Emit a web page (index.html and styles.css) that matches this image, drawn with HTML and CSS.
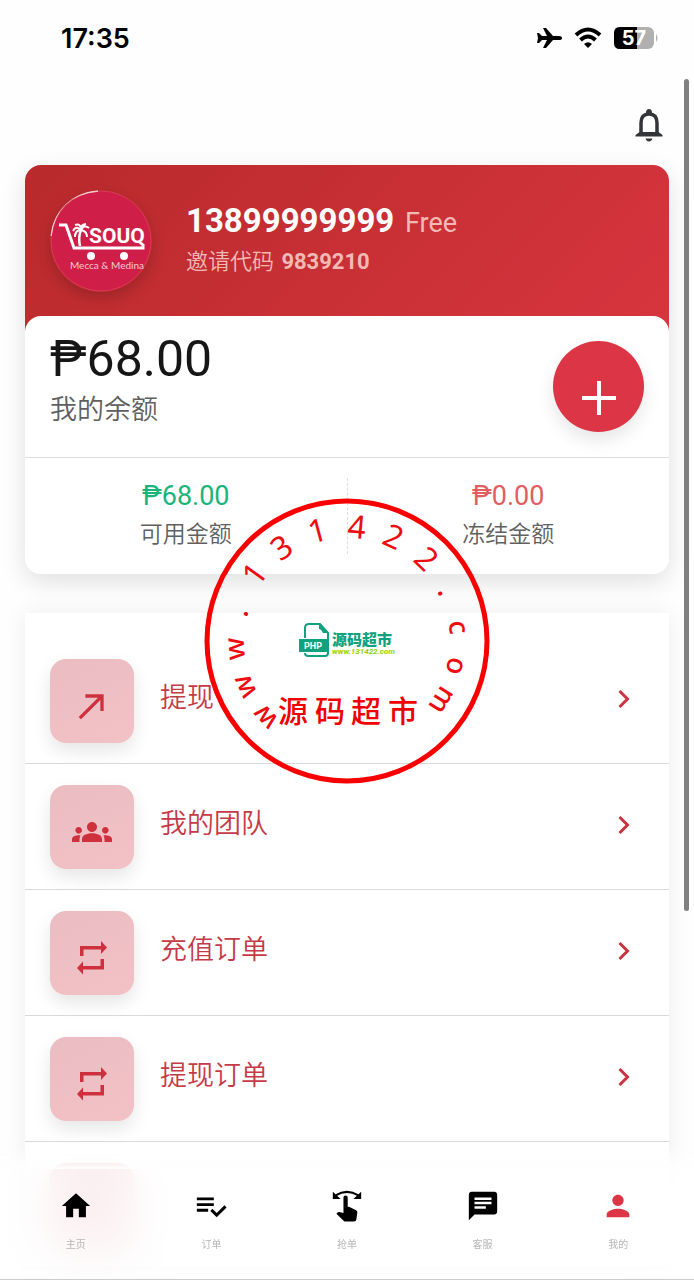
FILE: index.html
```html
<!DOCTYPE html>
<html lang="zh">
<head>
<meta charset="utf-8">
<meta name="viewport" content="width=device-width, initial-scale=1">
<title>我的</title>
<link rel="stylesheet" href="styles.css">
</head>
<body>
<div class="app">
  <header class="status">
    <span class="time">17:35</span>
    <div class="status-icons">
      <svg width="26" height="24" viewBox="0 0 26 24" aria-hidden="true"><path d="M1 7h2l3 3h5L7 2h3l7 8h6q3 0 3 2t-3 2h-6l-7 8H7l4-8H6l-3 3H1l1-5z"/></svg>
      <svg width="28" height="22" viewBox="0 0 28 22" aria-hidden="true"><g fill="none" stroke="#000" stroke-width="4"><path d="M2 8Q14-3 26 8"/><path d="M6.500 13Q14 6 21.500 13"/></g><path d="M14 21l-4-4q4-3.500 8 0z"/></svg>
      <svg width="44" height="22" viewBox="0 0 44 22" aria-label="57%"><rect width="40" height="22" rx="6" fill="#b0b0b0"/><path d="M6 0h17v22H6q-6 0-6-6V6q0-6 6-6z"/><path d="M42 7q3 4 0 8z" fill="#b0b0b0"/><text x="20" y="18" class="battery-text">57</text></svg>
    </div>
  </header>
  <div class="topbar">
    <button class="bell" aria-label="通知"><svg width="28" height="34" viewBox="0 0 28 34"><path d="M6 27V15q0-9 8-9t8 9v12" fill="none" stroke="#333539" stroke-width="3.500"/><path d="M11 5q0-4 3-4t3 4zM.500 28.500v-1.500l4-3h19l4 3v1.500zM10.500 30.500h7q-1 3-3.500 3t-3.500-3z" fill="#333539"/></svg></button>
  </div>

  <main>
    <section class="wallet">
      <div class="profile">
        <svg class="avatar" viewBox="0 0 102 102" role="img" aria-label="Souq Mecca &amp; Medina">
          <circle cx="51" cy="51" r="50" fill="#cf1f49" stroke="#d93a55"/>
          <path d="M1 46Q6 5 48 1" fill="none" stroke="#f6cbd1" stroke-width="1.500"/>
          <g fill="none" stroke="#fff" stroke-width="3"><path d="M9 35h7l8 23h69V54"/><path d="M30 56q-2-9 1-16" stroke-width="2.500"/><path d="M31 40q-5-5-8 1M31 40q-6 0-6 7M31 40q0-7-6-5M31 40q3-6 8-2M31 40q6 1 6 7M31 40q-1-5 5-6" stroke-width="2"/></g>
          <text x="39" y="53" class="logo-word">SOUQ</text>
          <circle cx="41" cy="66" r="4" fill="#fff"/><circle cx="74" cy="66" r="4" fill="#fff"/>
          <text x="57" y="79" class="logo-sub">Mecca &amp; Medina</text>
        </svg>
        <div class="identity">
          <div class="phone"><strong>13899999999</strong> <span>Free</span></div>
          <div class="invite">邀请代码 <b>9839210</b></div>
        </div>
      </div>
      <div class="balance-panel">
        <div class="balance">
          <div>
            <div class="amount">₱68.00</div>
            <div class="caption">我的余额</div>
          </div>
          <button class="add" aria-label="充值"><svg width="34" height="34" viewBox="0 0 34 34"><path d="M17 0v34M0 17h34" stroke="#fff" stroke-width="4"/></svg></button>
        </div>
        <div class="stats">
          <div class="stat"><div class="figure green">₱68.00</div><div class="label">可用金额</div></div>
          <div class="stat"><div class="figure coral">₱0.00</div><div class="label">冻结金额</div></div>
        </div>
      </div>
    </section>

    <nav class="menu" aria-label="账户">
      <a class="row" href="#"><span class="tile"><svg class="wide" viewBox="0 0 24 24"><path d="M8 5v2h7.590L4 18.590 5.410 20 17 8.410V15h2V5z"/></svg></span><span class="name">提现</span><svg class="chevron" viewBox="0 0 12 20"><path d="M2 2l8 8-8 8"/></svg></a>
      <a class="row" href="#"><span class="tile"><svg class="wide" viewBox="0 0 24 24"><path d="M12 12.750c1.630 0 3.070.390 4.240.900 1.080.480 1.760 1.560 1.760 2.730V18H6v-1.610c0-1.180.680-2.260 1.760-2.730 1.170-.520 2.610-.910 4.240-.910zM4 13c1.100 0 2-.900 2-2s-.900-2-2-2-2 .900-2 2 .900 2 2 2zm1.130 1.100c-.370-.060-.740-.100-1.130-.100-.990 0-1.930.210-2.780.580C.480 14.900 0 15.620 0 16.430V18h4.500v-1.610c0-.830.230-1.610.630-2.290zM20 13c1.100 0 2-.900 2-2s-.900-2-2-2-2 .900-2 2 .900 2 2 2zm4 3.430c0-.810-.480-1.530-1.220-1.850-.850-.370-1.790-.580-2.780-.580-.390 0-.760.040-1.130.100.400.680.630 1.460.630 2.290V18H24v-1.570zM12 6c1.660 0 3 1.340 3 3s-1.340 3-3 3-3-1.340-3-3 1.340-3 3-3z"/></svg></span><span class="name">我的团队</span><svg class="chevron" viewBox="0 0 12 20"><path d="M2 2l8 8-8 8"/></svg></a>
      <a class="row" href="#"><span class="tile"><svg viewBox="-2 0 34 34"><path d="M3 15V5h21V0l6 6.500-6 6.500V8.500H6.500V15zM27 18v10.500H6v5L0 27l6-6.500V25h17.500V18z"/></svg></span><span class="name">充值订单</span><svg class="chevron" viewBox="0 0 12 20"><path d="M2 2l8 8-8 8"/></svg></a>
      <a class="row" href="#"><span class="tile"><svg viewBox="-2 0 34 34"><path d="M3 15V5h21V0l6 6.500-6 6.500V8.500H6.500V15zM27 18v10.500H6v5L0 27l6-6.500V25h17.500V18z"/></svg></span><span class="name">提现订单</span><svg class="chevron" viewBox="0 0 12 20"><path d="M2 2l8 8-8 8"/></svg></a>
      <div class="row"><span class="tile"></span></div>
    </nav>
  </main>

  <svg class="stamp" viewBox="0 0 286 286" role="img" aria-label="www.131422.com">
    <circle cx="143" cy="143" r="140" fill="none" stroke="#f80000" stroke-width="5"/>
    <g class="ring">
      <text class="small" transform="rotate(-133 143 143)" x="143" y="40">w</text>
      <text class="small" transform="rotate(-114 143 143)" x="143" y="40">w</text>
      <text class="small" transform="rotate(-94 143 143)" x="143" y="40">w</text>
      <text transform="rotate(-75 143 143)" x="143" y="40">.</text>
      <text transform="rotate(-54 143 143)" x="143" y="40">1</text>
      <text transform="rotate(-35 143 143)" x="143" y="40">3</text>
      <text transform="rotate(-15 143 143)" x="143" y="40">1</text>
      <text transform="rotate(5 143 143)" x="143" y="40">4</text>
      <text transform="rotate(24 143 143)" x="143" y="40">2</text>
      <text transform="rotate(44 143 143)" x="143" y="40">2</text>
      <text transform="rotate(63 143 143)" x="143" y="40">.</text>
      <text class="small" transform="rotate(83 143 143)" x="143" y="40">c</text>
      <text class="small" transform="rotate(103 143 143)" x="143" y="40">o</text>
      <text class="small" transform="rotate(122 143 143)" x="143" y="40">m</text>
    </g>
    <text class="seal" y="224"><tspan x="89">源</tspan><tspan x="126">码</tspan><tspan x="162">超</tspan><tspan x="199">市</tspan></text>
    <g transform="translate(95 125)">
      <path d="M6 15V5q0-4 4-4h11l8 9v20q0 3-3 3H9q-3 0-3-3" fill="#fff" stroke="#10a27e" stroke-width="2"/>
      <path d="M20 0l10 10h-6q-2-4-4-4z" fill="#10a27e"/>
      <rect y="16" width="28" height="13" fill="#10a27e"/>
      <text x="14" y="26" class="php">PHP</text>
      <text x="33" y="22" class="brand">源码超市</text>
      <text x="33" y="31" class="site">www.131422.com</text>
    </g>
  </svg>

  <nav class="tabs" aria-label="主导航">
    <a href="#"><svg viewBox="0 0 24 24"><path d="M10 20v-6h4v6h5v-8h3L12 3 2 12h3v8z"/></svg>主页</a>
    <a href="#"><svg viewBox="0 0 24 24"><path d="M14 10H2v2h12v-2zm0-4H2v2h12V6zM2 16h8v-2H2v2zm19.500-4.500L23 13l-6.990 7-4.510-4.500L13 14l3.010 3 5.490-5.500z"/></svg>订单</a>
    <a href="#"><svg viewBox="0 0 24 24"><path d="M9.500 12V6a1.500 1.500 0 013 0v6.500l.900.100 5 2.400q1 .500.900 1.600l-.700 5q-.200 1.400-1.600 1.400H11q-.800 0-1.400-.600L4.500 17.500l.900-.900q.500-.500 1.200-.300l2.900.700z"/><path d="M4 4.500q8-5 16 0" fill="none" stroke="#000" stroke-width="1.500"/><path d="M2 2v5h5.500zM22 2v5h-5.500z"/></svg>抢单</a>
    <a href="#"><svg viewBox="0 0 24 24"><path d="M20 2H4c-1.100 0-1.990.900-1.990 2L2 22l4-4h14c1.100 0 2-.900 2-2V4c0-1.100-.900-2-2-2zM6 6h12v1.800H6zm8 8H6v-1.800h8zm4-3.200H6V9h12z"/></svg>客服</a>
    <a href="#" class="active"><svg viewBox="0 0 24 24"><path d="M12 12c2.210 0 4-1.790 4-4s-1.790-4-4-4-4 1.790-4 4 1.790 4 4 4zm0 2c-2.670 0-8 1.340-8 4v2h16v-2c0-2.660-5.330-4-8-4z"/></svg>我的</a>
  </nav>
  <div class="scrollbar"></div>
</div>
</body>
</html>
```
FILE: styles.css
```css
* { box-sizing: border-box; }
body {
  margin: 0;
  background: #fefefe;
  color: #161616;
  font-family: Roboto, "Noto Sans CJK SC", sans-serif;
}
button { border: 0; padding: 0; background: none; display: grid; place-items: center; }
a { color: inherit; text-decoration: none; }
.app { position: relative; height: 100vh; overflow: hidden; }

.status {
  display: flex;
  align-items: center;
  justify-content: space-between;
  height: 76px;
  padding: 0 36px 0 61px;
}
.time { font: 600 27px Inter, sans-serif; color: #000; }
.status-icons { display: flex; align-items: center; gap: 12px; }
.battery-text { font: 700 20px Inter, sans-serif; fill: #fff; text-anchor: middle; }
.topbar { display: flex; justify-content: flex-end; padding: 32px 31px 23px; }

main { padding: 0 25px; }
.wallet {
  border-radius: 16px;
  background: linear-gradient(135deg, #b82a2c, #d8353f) no-repeat 0 0 / 100% 180px;
  box-shadow: 0 8px 24px rgba(0, 0, 0, .12);
}
.profile { display: flex; align-items: center; gap: 34px; height: 151px; padding: 0 25px; }
.avatar { width: 102px; height: 102px; border-radius: 50%; box-shadow: 0 6px 14px rgba(0, 0, 0, .18); }
.logo-word { font: 700 21px Roboto, sans-serif; fill: #fff; }
.logo-sub { font: 10px Lato, sans-serif; fill: #f8c9d3; text-anchor: middle; }
.identity { color: #f2b9b5; }
.phone { font-size: 27px; line-height: 42px; }
.phone strong { margin-right: 4px; font-size: 33px; color: #fff; }
.invite { padding-bottom: 2px; font-size: 22px; font-weight: 350; line-height: 36px; }
.invite b { margin-left: 2px; font-weight: 700; }

.balance-panel { border-radius: 16px; background: #fff; }
.balance {
  display: flex;
  justify-content: space-between;
  align-items: flex-start;
  height: 142px;
  padding: 14px 25px 0;
  border-bottom: 1px solid #dcdcdc;
}
.amount { font-size: 50px; line-height: 58px; }
.caption { font-size: 27px; font-weight: 350; line-height: 44px; color: #606060; }
.add {
  width: 91px;
  height: 91px;
  margin-top: 11px;
  padding-top: 22px;
  border-radius: 50%;
  background: #dc3545;
  box-shadow: 0 8px 18px rgba(0, 0, 0, .1);
}
.stats { display: flex; padding: 20px 0; }
.stat { flex: 1; height: 76px; text-align: center; }
.stat + .stat { border-left: 1px dashed #ddd; }
.figure { font-size: 27px; line-height: 36px; }
.green { color: #1bb47c; }
.coral { color: #e0605f; }
.label { font-size: 23px; font-weight: 350; line-height: 42px; color: #606060; }

.menu { margin-top: 39px; padding-top: 25px; background: #fff; box-shadow: 0 0 22px rgba(0, 0, 0, .07); }
.row {
  display: flex;
  align-items: center;
  gap: 26px;
  height: 126px;
  padding: 0 39px 0 25px;
  border-bottom: 1px solid #d9d9d9;
  color: #c53a47;
}
.tile {
  display: grid;
  place-items: center;
  width: 84px;
  height: 84px;
  padding-top: 10px;
  border-radius: 16px;
  background: linear-gradient(155deg, #eabdc2, #f2c1c5);
  box-shadow: 0 8px 18px rgba(0, 0, 0, .1);
}
.tile svg { width: 34px; height: 34px; fill: #cf303e; }
.tile .wide { width: 40px; height: 40px; }
.name { flex: 1; padding-bottom: 6px; font-size: 27px; font-weight: 350; line-height: 40px; }
.chevron { width: 13px; height: 20px; margin-bottom: 4px; fill: none; stroke: #c9343f; stroke-width: 3; }

.stamp { position: absolute; top: 498px; left: 50%; width: 286px; height: 286px; transform: translateX(-50%); pointer-events: none; }
.ring { font: 32px "Noto Sans", sans-serif; fill: #ed0c10; text-anchor: middle; }
.ring .small { font-size: 28px; font-weight: 500; }
.seal { font: 500 30px "Noto Sans CJK SC", serif; fill: #f00000; text-anchor: middle; }
.php { font: 700 9px Roboto, sans-serif; fill: #fff; text-anchor: middle; }
.brand { font: 900 15px "Noto Sans CJK SC", sans-serif; fill: #10a27e; }
.site { font: italic 700 8px Roboto, sans-serif; fill: #8fd400; }

.tabs {
  position: absolute;
  inset: auto 0 0;
  display: flex;
  height: 111px;
  padding: 0 8px;
  border-bottom: 1px solid #ccc;
  background: rgba(255, 255, 255, .76);
  backdrop-filter: blur(22px);
}
.tabs::before {
  content: "";
  position: absolute;
  inset: -26px 0 100%;
  background: linear-gradient(transparent, #fefefe);
}
.tabs a {
  flex: 1;
  display: flex;
  flex-direction: column;
  align-items: center;
  gap: 14px;
  padding-top: 20px;
  font-size: 10px;
  line-height: 16px;
  color: #b5b5b5;
}
.tabs svg { width: 34px; height: 34px; fill: #000; }
.tabs .active svg { fill: #dc3545; }
.scrollbar { position: absolute; top: 79px; right: 5px; width: 5px; height: 65%; border-radius: 3px; background: #808080; }
```
